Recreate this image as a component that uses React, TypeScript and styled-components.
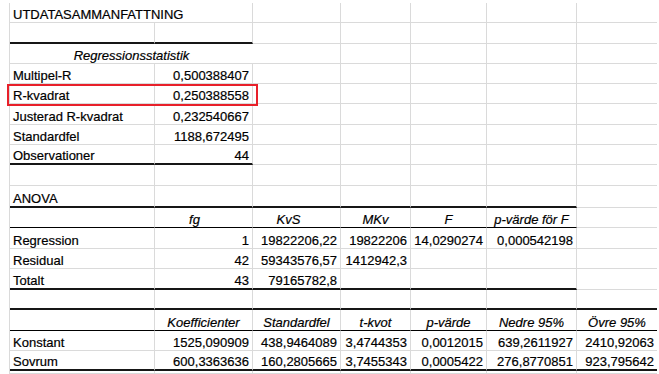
import React from 'react'
import styled, { createGlobalStyle } from 'styled-components'

const GlobalStyle = createGlobalStyle`
  html, body {
    margin: 0;
    background: #ffffff;
  }
  body {
    font-family: "Liberation Sans", Arial, sans-serif;
    font-size: 13px;
    color: #000;
  }
`

const GRID = '#dadada'
const COLS = [145, 98, 88, 70, 76, 90, 80]
const HEIGHTS = [20, 21, 20, 20, 20, 21, 20, 20, 21, 22, 20, 21, 20, 21, 20, 21, 20, 20, 3]

type Align = 'left' | 'right' | 'center'
type Rule = 'grid' | 'thin' | 'thick'

interface Spec {
  t: string
  italic?: boolean
  span?: number
  shift?: number
  align?: Align
}

interface RowSpec {
  cells: (string | Spec)[]
  rule?: { kind: Rule; cols: number }
}

const head = (t: string, shift = 0): Spec => ({ t, italic: true, align: 'center', shift })

const rows: RowSpec[] = [
  { cells: [{ t: 'UTDATASAMMANFATTNING' }] },
  { cells: [], rule: { kind: 'thick', cols: 2 } },
  { cells: [{ t: 'Regressionsstatistik', italic: true, align: 'center', span: 2 }] },
  { cells: ['Multipel-R', '0,500388407'] },
  { cells: ['R-kvadrat', '0,250388558'] },
  { cells: ['Justerad R-kvadrat', '0,232540667'] },
  { cells: ['Standardfel', '1188,672495'] },
  { cells: ['Observationer', '44'], rule: { kind: 'thick', cols: 2 } },
  { cells: [] },
  { cells: ['ANOVA'], rule: { kind: 'thick', cols: 6 } },
  {
    cells: ['', head('fg', 18), head('KvS', 16), head('MKv'), head('F'), head('p-värde för F')],
    rule: { kind: 'thin', cols: 6 },
  },
  { cells: ['Regression', '1', '19822206,22', '19822206', '14,0290274', '0,000542198'] },
  { cells: ['Residual', '42', '59343576,57', '1412942,3'] },
  { cells: ['Totalt', '43', '79165782,8'], rule: { kind: 'thick', cols: 6 } },
  { cells: [], rule: { kind: 'thick', cols: 7 } },
  {
    cells: ['', head('Koefficienter'), head('Standardfel'), head('t-kvot'), head('p-värde'), head('Nedre 95%'), head('Övre 95%')],
    rule: { kind: 'thin', cols: 7 },
  },
  { cells: ['Konstant', '1525,090909', '438,9464089', '3,4744353', '0,0012015', '639,2611927', '2410,92063'] },
  { cells: ['Sovrum', '600,3363636', '160,2805665', '3,7455343', '0,0005422', '276,8770851', '923,795642'], rule: { kind: 'thick', cols: 7 } },
  { cells: [] },
]

const Page = styled.div`
  position: relative;
  padding: 3px 0 0 9px;
`

const Sheet = styled.div`
  display: grid;
  grid-template-columns: ${COLS.map((c) => c + 'px').join(' ')};
  grid-template-rows: ${HEIGHTS.map((h) => h + 'px').join(' ')};
  border-left: 1px solid ${GRID};
  width: max-content;
`

const Cell = styled.div<{ $align: Align; $italic: boolean; $bottom: Rule; $edge: boolean; $open: boolean; $span: number; $shift: number }>`
  box-sizing: border-box;
  display: flex;
  align-items: flex-end;
  justify-content: ${({ $align }) => ($align === 'right' ? 'flex-end' : $align === 'center' ? 'center' : 'flex-start')};
  grid-column: span ${({ $span }) => $span};
  min-width: 0;
  padding: 0 ${({ $shift }) => 3 + $shift}px 0 3px;
  line-height: 15px;
  white-space: nowrap;
  -webkit-text-stroke: 0.2px #000;
  font-style: ${({ $italic }) => ($italic ? 'italic' : 'normal')};
  border-right: ${({ $edge, $open }) => ($edge || $open ? 'none' : `1px solid ${GRID}`)};
  border-bottom: ${({ $bottom }) =>
    $bottom === 'thick' ? '2px solid #161616' : $bottom === 'thin' ? '1px solid #000' : `1px solid ${GRID}`};
`

const Highlight = styled.div`
  position: absolute;
  left: 7px;
  top: 84px;
  width: 251px;
  height: 22px;
  box-sizing: border-box;
  border: 2px solid #e8202a;
  pointer-events: none;
`

const isNumber = (s: string) => /^[\d,]+$/.test(s)

const SheetRow = ({ row }: { row: RowSpec }) => {
  const out: React.ReactNode[] = []
  let col = 0
  const specs = row.cells.map((c) => (typeof c === 'string' ? { t: c } : c))
  while (col < COLS.length) {
    const spec: Spec = specs[col] ?? { t: '' }
    const span = spec.span ?? 1
    const last = col + span - 1
    const align: Align = spec.align ?? (isNumber(spec.t) ? 'right' : 'left')
    // long left text spills into the empty cell beside it, like Excel does
    const open = col === 0 && spec.t.length > 18 && !specs[1]
    const bottom: Rule = row.rule && last < row.rule.cols ? row.rule.kind : 'grid'
    out.push(
      <Cell
        key={col}
        $align={align}
        $italic={!!spec.italic}
        $bottom={bottom}
        $edge={last === COLS.length - 1}
        $open={open}
        $span={span}
        $shift={spec.shift ?? 0}
      >
        {spec.t}
      </Cell>
    )
    col += span
  }
  return <>{out}</>
}

export default function App() {
  return (
    <>
      <GlobalStyle />
      <Page>
        <Sheet>
          {rows.map((r, i) => (
            <SheetRow key={i} row={r} />
          ))}
        </Sheet>
        <Highlight />
      </Page>
    </>
  )
}
